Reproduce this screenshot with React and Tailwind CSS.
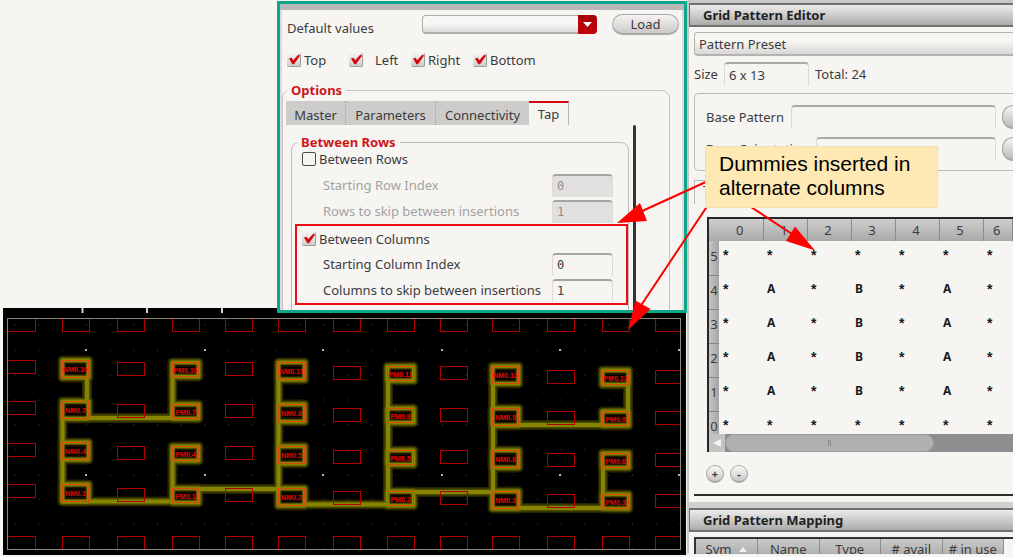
import React from "react";

const COLUMN_X = [8, 62, 117, 172, 225, 278, 333, 387, 440, 492, 547, 602, 655];

const LOW = [362.5, 404.5, 446.5, 488.5];
const MID = [366.5, 408.5, 450.5, 491.5];
const DEEP = [370.5, 411.5, 453.5, 494.5];

const DUMMIES = [
  { x: 8, ys: [360.5, 401.5, 443.5, 484.5] },
  { x: 117, ys: LOW },
  { x: 225, ys: LOW },
  { x: 333, ys: MID },
  { x: 440, ys: MID },
  { x: 547, ys: DEEP },
  { x: 655, ys: DEEP },
];

const DEVICES = [
  { x: 62.5, h: 17, ys: [360.5, 401.5, 442.5, 484.5], names: ["NM0.10", "NM0.7", "NM0.4", "NM0.1"] },
  { x: 172.5, h: 14, ys: LOW, names: ["PM0.10", "PM0.7", "PM0.4", "PM0.1"] },
  { x: 278.5, h: 17, ys: LOW, names: ["NM0.11", "NM0.8", "NM0.5", "NM0.2"] },
  { x: 387.5, h: 14, ys: MID, names: ["PM0.11", "PM0.8", "PM0.5", "PM0.2"] },
  { x: 492.5, h: 17, ys: MID, names: ["NM0.12", "NM0.9", "NM0.6", "NM0.3"] },
  { x: 602.5, h: 14, ys: DEEP, names: ["PM0.12", "PM0.9", "PM0.6", "PM0.3"] },
];

const WIRES =
  "M87 362V418H172.5V364 M62.5 404V501.5H172.5V448 M196 489H278.5 M278.5 364V504.5H388 M388 368V505 M388 492H493 M493 368V508H603V455 M493 425H628V372";

const GRID_X = Array.from({ length: 29 }, (_, i) => 14.5 + i * 23.75);
const GRID_Y = [325, 350, 375, 400, 425, 450, 475, 499, 524, 549];

function Layout() {
  return (
    <svg
      className="ml-[3px] -mt-[5px] block w-[683px] h-[247px]"
      viewBox="3 308 683 247"
      role="img"
      aria-label="Layout canvas"
    >
      <defs>
        <clipPath id="canvas">
          <rect x="8" y="318" width="672" height="232" />
        </clipPath>
      </defs>
      <rect x="3" y="308" width="683" height="247" fill="#000" />
      <path d="M82.5 308V313M147 308V313M222 308V313" stroke="#d8d6d2" strokeWidth="2" />
      <g>
        {GRID_X.map((x) =>
          GRID_Y.map((y) => <rect key={`${x}-${y}`} x={x} y={y - 0.5} width="1" height="1" fill="#4a4a4a" />)
        )}
        {[85, 204, 322, 441, 559, 678].map((x) =>
          [349, 474].map((y) => <rect key={`${x}-${y}`} x={x} y={y} width="2" height="2" fill="#b5b5b5" />)
        )}
      </g>
      {[
        [10, "#262500"],
        [7, "#4b4a00"],
        [4, "#878400"],
      ].map(([width, color]) => (
        <g key={width} fill="none" stroke={color} strokeWidth={width} strokeLinejoin="round">
          <path d={WIRES} />
          {DEVICES.map((d) =>
            d.ys.map((y) => <rect key={`${d.x}-${y}`} x={d.x} y={y} width="26" height={d.h} />)
          )}
        </g>
      ))}
      <g clipPath="url(#canvas)" fill="none" stroke="#b00000" strokeWidth="1">
        {COLUMN_X.map((x) => (
          <g key={x}>
            <rect x={x < 10 ? 0.5 : x + 0.5} y="310.5" width={x < 10 ? 35 : 27} height="21" />
            <rect x={x < 10 ? 0.5 : x + 0.5} y="536.5" width={x < 10 ? 35 : 27} height="21" />
          </g>
        ))}
        {DUMMIES.map((d) =>
          d.ys.map((y) => (
            <rect key={`${d.x}-${y}`} x={d.x < 10 ? 0.5 : d.x + 0.5} y={y} width={d.x < 10 ? 35 : 27} height="13" />
          ))
        )}
      </g>
      {DEVICES.map((d) =>
        d.ys.map((y, i) => (
          <g key={`${d.x}-${y}`}>
            <rect x={d.x + 2} y={y + 2} width="22" height={d.h - 4} fill="#3c3500" />
            <rect x={d.x + 3} y={y + 3} width="20" height={d.h - 6} fill="#0c0600" />
            <rect x={d.x} y={y} width="26" height={d.h} fill="none" stroke="#d8480a" strokeWidth="1" />
            <text
              x={d.x + 13}
              y={y + d.h / 2 + 3}
              textAnchor="middle"
              fill="#e80000"
              className="font-['Liberation_Sans',Arial,sans-serif] text-[7px] font-bold"
            >
              {d.names[i]}
            </text>
          </g>
        ))
      )}
      <rect x="7.5" y="318.5" width="673" height="231" fill="none" stroke="#8d867a" />
    </svg>
  );
}

function Check({ label, checked, gap = "gap-[3px]" }) {
  return (
    <label className={`flex items-center ${gap}`}>
      <span className="relative block size-[14px]">
        <input
          type="checkbox"
          defaultChecked={checked}
          className={
            checked
              ? "block size-[14px] appearance-none rounded-xs border-r border-b border-[#9c9c9c] bg-linear-to-b from-[#f4f4f2] to-[#cfcfcf]"
              : "block size-[14px] appearance-none rounded-xs border border-[#4c4c4c] bg-[#f5f4f1]"
          }
        />
        {checked && (
          <svg viewBox="0 0 14 14" className="pointer-events-none absolute inset-0 size-[14px]">
            <path d="M2 5.6L4.6 4.8L6.2 7.2L11.4 1.4L13 2.8L7 11.2L5.4 11.2Z" fill="#d4060e" />
          </svg>
        )}
      </span>
      <span>{label}</span>
    </label>
  );
}

function IndexField({ label, value, disabled }) {
  return (
    <label
      className={`flex h-[26px] items-center justify-between pr-[13px] pl-[27px] ${disabled ? "text-[#a3a2a0]" : ""}`}
    >
      <span>{label}</span>
      <input
        type="text"
        defaultValue={value}
        disabled={disabled}
        className={`h-[23px] w-[61px] rounded-t-sm border-x border-t-2 border-x-[#dddbd8] border-t-[#a5a4a5] pl-1 font-['DejaVu_Sans_Mono',monospace] text-[12px] ${
          disabled ? "bg-[#e2e0de] text-[#8e8d8c]" : "bg-[#f7f5f2]"
        }`}
      />
    </label>
  );
}

const TAB = "h-6 border-r border-dotted border-[#a0a0a0] bg-[#cdccca] pt-[3px]";

function OptionsPanel() {
  return (
    <section className="relative z-10 mt-px h-[312px] w-[410px] overflow-hidden border-3 border-[#0aa888] bg-[#f7f5f2]">
      <div className="h-[6px] bg-[#b9b8b8]" />
      <div className="flex h-full flex-col border-x-2 border-[#dcdad7] pt-1">
        <div className="flex h-[21px] items-center pl-[5px]">
          <label htmlFor="defaults" className="w-[135px] pt-[7px]">
            Default values
          </label>
          <div className="relative h-[19px] w-[175px]">
            <select
              id="defaults"
              className="h-[19px] w-full appearance-none rounded-[4px] border border-b-2 border-[#aeadad] bg-linear-to-b from-[#f8f7f5] from-50% to-[#dddcda]"
            />
            <span className="pointer-events-none absolute top-0 right-0 flex h-[19px] w-[19px] items-center justify-center rounded-r-[4px] bg-linear-to-b from-[#a80008] to-[#c4000c]">
              <svg viewBox="0 0 9 5" className="h-[5px] w-[9px]">
                <path d="M0 0H9L4.5 5Z" fill="#fff" />
              </svg>
            </span>
          </div>
          <button className="ml-[15px] h-[21px] w-[67px] rounded-full border border-b-2 border-[#aaa9a9] bg-linear-to-b from-[#f5f4f3] to-[#cbcac9]">
            Load
          </button>
        </div>
        <div className="mt-4 grid h-5 grid-cols-[62px_62px_62px_1fr] items-center pl-[5px]">
          <Check label="Top" checked />
          <Check label="Left" checked gap="gap-3" />
          <Check label="Right" checked />
          <Check label="Bottom" checked />
        </div>
        <fieldset className="mt-[11px] mr-[12px] grow rounded-t-lg border border-[#c6c4c2] pl-[3px]">
          <legend className="ml-px px-1 leading-5 font-bold text-[#cc1720]">Options</legend>
          <div role="tablist" className="mt-px flex">
            <button role="tab" className={`${TAB} w-[60px]`}>
              Master
            </button>
            <button role="tab" className={`${TAB} w-[90px]`}>
              Parameters
            </button>
            <button role="tab" className={`${TAB} w-[93px] border-r-0`}>
              Connectivity
            </button>
            <button
              role="tab"
              aria-selected="true"
              className="h-6 w-10 border-t-2 border-r border-t-[#d4060e] border-r-[#b5b4b3] bg-[#f7f5f2]"
            >
              Tap
            </button>
          </div>
          <div className="flex">
            <fieldset className="mt-[9px] ml-[5px] h-[190px] w-[338px] rounded-t-lg border border-[#bdbbb9]">
              <legend className="ml-[5px] px-1 leading-4 font-bold text-[#cc1720]">Between Rows</legend>
              <div className="pl-[10px]">
                <Check label="Between Rows" />
              </div>
              <div className="mt-1 pr-0.5 pl-1">
                <IndexField label="Starting Row Index" value="0" disabled />
                <IndexField label="Rows to skip between insertions" value="1" disabled />
              </div>
              <div className="ml-[3px] border-2 border-[#f00a14] pt-1">
                <div className="pl-[5px]">
                  <Check label="Between Columns" checked />
                </div>
                <div className="mt-[3px] -ml-px">
                  <IndexField label="Starting Column Index" value="0" />
                  <IndexField label="Columns to skip between insertions" value="1" />
                </div>
              </div>
            </fieldset>
            <div className="ml-[4px] h-[190px] w-[3px] rounded-t-sm bg-[#333]" />
          </div>
        </fieldset>
      </div>
    </section>
  );
}

const ROWS = [
  ["5", "*", "*", "*", "*", "*", "*", "*"],
  ["4", "*", "A", "*", "B", "*", "A", "*"],
  ["3", "*", "A", "*", "B", "*", "A", "*"],
  ["2", "*", "A", "*", "B", "*", "A", "*"],
  ["1", "*", "A", "*", "B", "*", "A", "*"],
  ["0", "*", "*", "*", "*", "*", "*", "*"],
];

const BAR =
  "flex h-6 items-center border-y-2 border-l border-[#707071] bg-linear-to-b from-[#eeedec] to-[#acabab] pl-[13px] font-bold text-[#222]";
const FIELD = "rounded-t-sm border-x border-t-2 border-x-[#dddbd8] border-t-[#aaa9ab] bg-transparent";
const ROUND =
  "flex size-[18px] items-center justify-center rounded-full border border-b-2 border-[#a9a8a8] bg-linear-to-b from-[#fafaf9] to-[#c9c8c7] text-[11px] leading-none font-bold";

function PatternGrid() {
  return (
    <div className="ml-[18px] border-t-2 border-l-2 border-[#262626]">
      <div className="h-[215px] overflow-hidden">
        <table className="w-full table-fixed border-collapse">
          <colgroup>
            <col className="w-[10px]" />
            <col className="w-[44px]" />
            <col className="w-[44px]" />
            <col className="w-[44px]" />
            <col className="w-[44px]" />
            <col className="w-[44px]" />
            <col className="w-[44px]" />
            <col />
          </colgroup>
          <thead>
            <tr className="h-[22px] bg-linear-to-b from-[#cfcfce] to-[#a9a9a9]">
              <td />
              {["0", "1", "2", "3", "4", "5", "6"].map((c) => (
                <th key={c} className="border-r border-[#8b8a8a] p-0 pr-[2px] font-normal">
                  {c}
                </th>
              ))}
            </tr>
          </thead>
          <tbody>
            {ROWS.map(([head, ...cells]) => (
              <tr key={head} className="h-[34px]">
                <th className="border-b border-[#858484] bg-linear-to-r from-[#c6c5c5] to-[#a4a4a4] p-0 pb-1 font-normal">
                  {head}
                </th>
                {cells.map((c, i) => (
                  <td
                    key={i}
                    className={
                      c === "*"
                        ? "p-0 pb-[6px] pl-1 font-['Liberation_Sans',Arial,sans-serif] text-[14px] leading-4 font-bold text-[#1c1c1c]"
                        : "p-0 pb-[6px] pl-1 text-[12px] leading-4 font-bold text-[#1c1c1c]"
                    }
                  >
                    {c}
                  </td>
                ))}
              </tr>
            ))}
          </tbody>
        </table>
      </div>
      <div className="flex h-[18px] bg-[#8e8d90]">
        <button aria-label="Scroll left" className="flex w-4 items-center justify-center bg-[#c4c3c3]">
          <svg viewBox="0 0 8 8" className="size-2">
            <path d="M8 0V8L0 4Z" fill="#f3f2f0" />
          </svg>
        </button>
        <div className="flex w-[209px] items-center justify-center gap-px rounded-full border border-[#9d9c9c] bg-[#b1b0b0]">
          <span className="h-[6px] w-px bg-[#8b8a8a]" />
          <span className="h-[6px] w-px bg-[#8b8a8a]" />
        </div>
      </div>
    </div>
  );
}

function EditorPanel() {
  return (
    <section className="flex h-[554px] min-w-0 flex-1 flex-col overflow-hidden border-l-2 border-[#c9c7c5]">
      <div className="h-[3px] shrink-0 bg-[#c9c8c6]" />
      <h2 className={`${BAR} shrink-0`}>Grid Pattern Editor</h2>
      <div className="mt-[5px] pl-[5px]">
        <select
          aria-label="Pattern preset"
          className="block h-6 w-full appearance-none rounded-l-[4px] border border-r-0 border-b-2 border-[#b4b3b3] bg-linear-to-b from-[#f7f5f2] from-40% to-[#d9d8d6] pl-1"
        >
          <option>Pattern Preset</option>
        </select>
      </div>
      <div className="mt-[6px] flex h-6 items-center pl-[5px]">
        <label htmlFor="size" className="w-[30px]">
          Size
        </label>
        <input id="size" type="text" defaultValue="6 x 13" className={`${FIELD} h-6 w-[85px] pl-1`} />
        <span className="pl-[6px]">Total: 24</span>
      </div>
      <div className="mt-[7px] ml-[5px] h-[78px] shrink-0 rounded-l-[5px] border border-r-0 border-[#bcbab8] pt-[11px] pl-[11px]">
        <div className="flex h-6 items-center">
          <label htmlFor="base" className="w-[85px] shrink-0">
            Base Pattern
          </label>
          <input id="base" type="text" className={`${FIELD} h-6 min-w-0 flex-1`} />
          <button
            aria-label="Browse pattern"
            className="ml-[6px] h-6 w-[11px] shrink-0 rounded-l-full border border-r-0 border-b-2 border-[#a9a8a8] bg-linear-to-b from-[#f7f6f5] to-[#bdbcbb]"
          />
        </div>
        <div className="mt-2 flex h-6 items-center">
          <label htmlFor="orient" className="w-[110px] shrink-0">
            Base Orientation
          </label>
          <input id="orient" type="text" className={`${FIELD} h-6 min-w-0 flex-1`} />
          <button
            aria-label="Browse orientation"
            className="ml-[6px] h-6 w-[11px] shrink-0 rounded-l-full border border-r-0 border-b-2 border-[#a9a8a8] bg-linear-to-b from-[#f7f6f5] to-[#bdbcbb]"
          />
        </div>
      </div>
      <div className="mt-[9px] ml-[5px] h-6 w-12 shrink-0 border-t border-l border-[#bcbab8] pl-2">T</div>
      <div className="mt-[13px] shrink-0">
        <PatternGrid />
      </div>
      <div className="mt-[13px] ml-[17px] flex shrink-0 gap-[6px]">
        <button className={ROUND} aria-label="Add">
          +
        </button>
        <button className={ROUND} aria-label="Remove">
          -
        </button>
      </div>
      <div className="mt-[11px] ml-[5px] h-[2px] shrink-0 bg-[#2c2c2c]" />
      <div className="mt-[6px] h-[6px] shrink-0 bg-[#d2d0ce]" />
      <h2 className={`${BAR} shrink-0`}>Grid Pattern Mapping</h2>
      <div className="mt-[5px] ml-[5px] h-5 shrink-0 border-t-2 border-l-2 border-[#333]">
        <table className="w-[308px] table-fixed border-collapse">
          <thead>
            <tr className="h-5 bg-linear-to-b from-[#cbcaca] to-[#a9a8a8]">
              {["Sym", "Name", "Type", "# avail", "# in use"].map((h) => (
                <th key={h} className="border-r border-[#8f8e8e] p-0 font-normal">
                  <span className="flex items-center justify-center gap-2">
                    {h}
                    {h === "Sym" && (
                      <svg viewBox="0 0 8 5" className="h-[5px] w-2">
                        <path d="M4 0L8 5H0Z" fill="#f3f2f0" />
                      </svg>
                    )}
                  </span>
                </th>
              ))}
            </tr>
          </thead>
        </table>
      </div>
    </section>
  );
}

function Annotations() {
  return (
    <>
      <svg
        className="pointer-events-none absolute top-0 left-0 z-20 h-[557px] w-[1013px]"
        viewBox="0 0 1013 557"
        aria-hidden="true"
      >
        <g stroke="#f00" strokeWidth="2">
          <path d="M708 181L640 212M708 205L638 310M748 205L795 236" />
        </g>
        <g fill="#f00">
          <path d="M617 223L640 203L647 221Z" />
          <path d="M628 330L635.5 300.5L650.5 309Z" />
          <path d="M815 250.5L795 226.5L786 241Z" />
        </g>
      </svg>
      <p className="absolute top-[146px] left-[705px] z-30 h-[62px] w-[233px] border border-[#f0dfb4] bg-[#fee8b4] pt-[5px] pl-[13px] font-['Liberation_Sans',Arial,sans-serif] text-[21px] leading-6 whitespace-nowrap text-black">
        Dummies inserted in
        <br />
        alternate columns
      </p>
    </>
  );
}

export default function App() {
  return (
    <main className="relative flex min-h-screen items-start overflow-hidden bg-[#f7f5f2] font-['Noto_Sans','Open_Sans',sans-serif] text-[13px] leading-[18px] text-[#3b3b3d]">
      <div className="w-[687px] shrink-0">
        <div className="flex justify-end">
          <OptionsPanel />
        </div>
        <Layout />
      </div>
      <EditorPanel />
      <Annotations />
    </main>
  );
}
